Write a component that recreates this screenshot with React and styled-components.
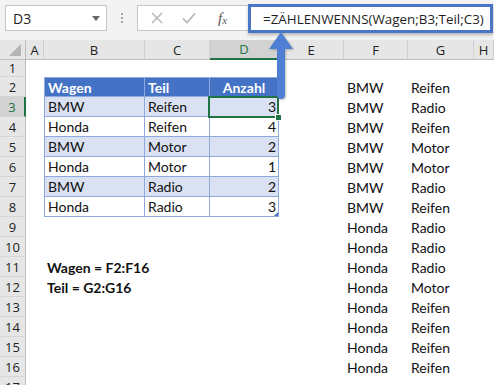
import React from 'react'
import styled, { createGlobalStyle, css } from 'styled-components'

const Global = createGlobalStyle`
  body {
    margin: 0;
    background: #ffffff;
    overflow: hidden;
  }
`

const Page = styled.div`
  position: relative;
  width: 494px;
  height: 385px;
  overflow: hidden;
  background: #ffffff;
`

const TopBar = styled.div`
  display: flex;
  align-items: flex-start;
  height: 40px;
  padding: 5px 1px 0 5px;
  box-sizing: border-box;
  background: #f3f3f3;
  font-family: "Open Sans", "Noto Sans", sans-serif;
  & > * {
    flex-shrink: 0;
  }
`

const NameBox = styled.div`
  display: flex;
  align-items: center;
  justify-content: space-between;
  width: 102px;
  height: 26px;
  box-sizing: border-box;
  padding: 0 6px 0 7px;
  background: #ffffff;
  border: 1px solid #c6c6c6;
  font-size: 14px;
  color: #222;
`

const Caret = styled.span`
  width: 0;
  height: 0;
  border-left: 4px solid transparent;
  border-right: 4px solid transparent;
  border-top: 5px solid #666;
`

const Dots = styled.div`
  display: flex;
  flex-direction: column;
  gap: 2px;
  width: 30px;
  align-items: center;
  padding-top: 8px;
  & > span {
    width: 2px;
    height: 2px;
    background: #a6a6a6;
  }
`

const IconBox = styled.div`
  display: flex;
  align-items: center;
  width: 111px;
  height: 26px;
  box-sizing: border-box;
  background: #ffffff;
  border: 1px solid #c6c6c6;
  border-right: none;
  padding-left: 13px;
  gap: 19px;
`

const Fx = styled.span`
  font-family: "Liberation Serif", serif;
  font-style: italic;
  font-size: 15px;
  color: #555;
  margin-left: 3px;
  & > sub {
    font-size: 11px;
    vertical-align: -1px;
  }
`

const FormulaInput = styled.div`
  flex: 1 1 auto !important;
  min-width: 0;
  height: 29px;
  margin-top: -1px;
  box-sizing: border-box;
  border: 3px solid #4a76c6;
  background: #ffffff;
  box-shadow: 0 2px 3px rgba(0, 0, 0, 0.25);
  display: flex;
  align-items: center;
  padding-left: 12px;
  font-size: 13.4px;
  color: #1f1f1f;
  white-space: nowrap;
`

const Sheet = styled.div`
  display: grid;
  grid-template-columns: 26px 18px 101px 65px 69px 65px 64px 66px 1fr;
  grid-template-rows: 20px 17px repeat(16, 20px);
`

const headBase = css`
  display: flex;
  align-items: center;
  justify-content: center;
  box-sizing: border-box;
  font-family: "Open Sans", "Noto Sans", sans-serif;
  font-size: 13px;
  background: ${p => (p.$active ? '#d2d2d2' : '#e6e6e6')};
  color: ${p => (p.$active ? '#217346' : '#222')};
`

const Corner = styled.div`
  ${headBase};
  position: relative;
  border-right: 1px solid #bdbdbd;
  border-bottom: 1px solid #bdbdbd;
  &::after {
    content: '';
    position: absolute;
    right: 4px;
    bottom: 3px;
    width: 0;
    height: 0;
    border-left: 12px solid transparent;
    border-bottom: 12px solid #b4b4b4;
  }
`

const ColHead = styled.div`
  ${headBase};
  border-right: 1px solid #d0d0d0;
  border-bottom: ${p => (p.$active ? '2px solid #217346' : '1px solid #bdbdbd')};
`

const RowHead = styled.div`
  ${headBase};
  border-bottom: 1px solid #d6d6d6;
  border-right: ${p => (p.$active ? '2px solid #217346' : '1px solid #bdbdbd')};
`

const Cell = styled.div`
  position: relative;
  display: flex;
  align-items: center;
  justify-content: ${p => (p.$align === 'right' ? 'flex-end' : p.$align === 'center' ? 'center' : 'flex-start')};
  box-sizing: border-box;
  padding: 0 ${p => (p.$align === 'right' ? '2px' : '3px')};
  white-space: nowrap;
  font-family: Lato, "Open Sans", sans-serif;
  font-size: 14px;
  font-weight: ${p => (p.$bold ? 700 : 400)};
  color: #111;
  z-index: ${p => (p.$selected ? 2 : 'auto')};
  ${p =>
    p.$table &&
    css`
      border-right: 1px solid #8ea9db;
      border-bottom: 1px solid #8ea9db;
      background: ${p.$head ? '#4472c4' : p.$band ? '#d9e1f2' : '#ffffff'};
    `}
  ${p => p.$first && 'border-left: 1px solid #8ea9db;'}
  ${p => p.$top && 'border-top: 1px solid #8ea9db;'}
  ${p => p.$head && 'color: #ffffff; font-weight: 700;'}
  ${p =>
    p.$selected &&
    css`
      &::after {
        content: '';
        position: absolute;
        left: -2px;
        top: -1px;
        right: -1px;
        bottom: -2px;
        border: 2px solid #217346;
      }
      &::before {
        content: '';
        position: absolute;
        right: -4px;
        bottom: -5px;
        width: 5px;
        height: 5px;
        background: #217346;
        border: 1px solid #fff;
        z-index: 3;
      }
    `}
  ${p =>
    p.$corner &&
    css`
      &::after {
        content: '';
        position: absolute;
        right: 0;
        bottom: 0;
        border-left: 4px solid transparent;
        border-bottom: 4px solid #4472c4;
      }
    `}
`

const Arrow = styled.svg`
  position: absolute;
  left: 266px;
  top: 31px;
  z-index: 5;
  filter: drop-shadow(1px 1px 1px rgba(0, 0, 0, 0.25));
`

const cols = ['A', 'B', 'C', 'D', 'E', 'F', 'G', 'H']

const table = [
  ['BMW', 'Reifen', 3],
  ['Honda', 'Reifen', 4],
  ['BMW', 'Motor', 2],
  ['Honda', 'Motor', 1],
  ['BMW', 'Radio', 2],
  ['Honda', 'Radio', 3],
]

const list = [
  ['BMW', 'Reifen'], ['BMW', 'Radio'], ['BMW', 'Reifen'], ['BMW', 'Motor'],
  ['BMW', 'Motor'], ['BMW', 'Radio'], ['BMW', 'Reifen'],
  ['Honda', 'Radio'], ['Honda', 'Radio'], ['Honda', 'Radio'], ['Honda', 'Motor'],
  ['Honda', 'Reifen'], ['Honda', 'Reifen'], ['Honda', 'Reifen'], ['Honda', 'Reifen'],
]

const notes = { 11: 'Wagen = F2:F16', 12: 'Teil = G2:G16' }

const renderCell = (r, c) => {
  const key = `${r}-${c}`
  if (r >= 2 && r <= 8 && c >= 1 && c <= 3) {
    const head = r === 2
    const row = table[r - 3]
    const text = head ? ['Wagen', 'Teil', 'Anzahl'][c - 1] : row[c - 1]
    const align = c === 3 ? (head ? 'center' : 'right') : 'left'
    return (
      <Cell
        key={key}
        $table
        $head={head}
        $band={!head && r % 2 === 1}
        $first={c === 1}
        $top={head}
        $align={align}
        $selected={r === 3 && c === 3}
        $corner={r === 8 && c === 3}
      >
        {text}
      </Cell>
    )
  }
  if (r >= 2 && r <= 16 && (c === 5 || c === 6)) {
    return <Cell key={key}>{list[r - 2][c - 5]}</Cell>
  }
  if (c === 1 && notes[r]) {
    return <Cell key={key} $bold>{notes[r]}</Cell>
  }
  return <Cell key={key} />
}

export default function App() {
  const rows = []
  for (let r = 1; r <= 17; r++) {
    rows.push(<RowHead key={`h${r}`} $active={r === 3}>{r}</RowHead>)
    for (let c = 0; c < 8; c++) rows.push(renderCell(r, c))
  }

  return (
    <Page>
      <Global />
      <TopBar>
        <NameBox>
          D3
          <Caret />
        </NameBox>
        <Dots><span /><span /><span /></Dots>
        <IconBox>
          <svg width="12" height="12" viewBox="0 0 12 12">
            <path d="M1 1 L11 11 M11 1 L1 11" stroke="#b3b3b3" strokeWidth="1.4" fill="none" />
          </svg>
          <svg width="14" height="12" viewBox="0 0 14 12">
            <path d="M1 6.5 L5 10.5 L13 1.5" stroke="#b3b3b3" strokeWidth="1.6" fill="none" />
          </svg>
          <Fx>f<sub>x</sub></Fx>
        </IconBox>
        <FormulaInput>=ZÄHLENWENNS(Wagen;B3;Teil;C3)</FormulaInput>
      </TopBar>
      <Sheet>
        <Corner />
        {cols.map(l => (
          <ColHead key={l} $active={l === 'D'}>{l}</ColHead>
        ))}
        {rows}
      </Sheet>
      <Arrow width="30" height="70" viewBox="0 0 30 70">
        <path d="M15 1 L27 18 L19 18 L19 64 Q19 68 15 68 Q11 68 11 64 L11 18 L3 18 Z" fill="#4f7fd3" />
      </Arrow>
    </Page>
  )
}
